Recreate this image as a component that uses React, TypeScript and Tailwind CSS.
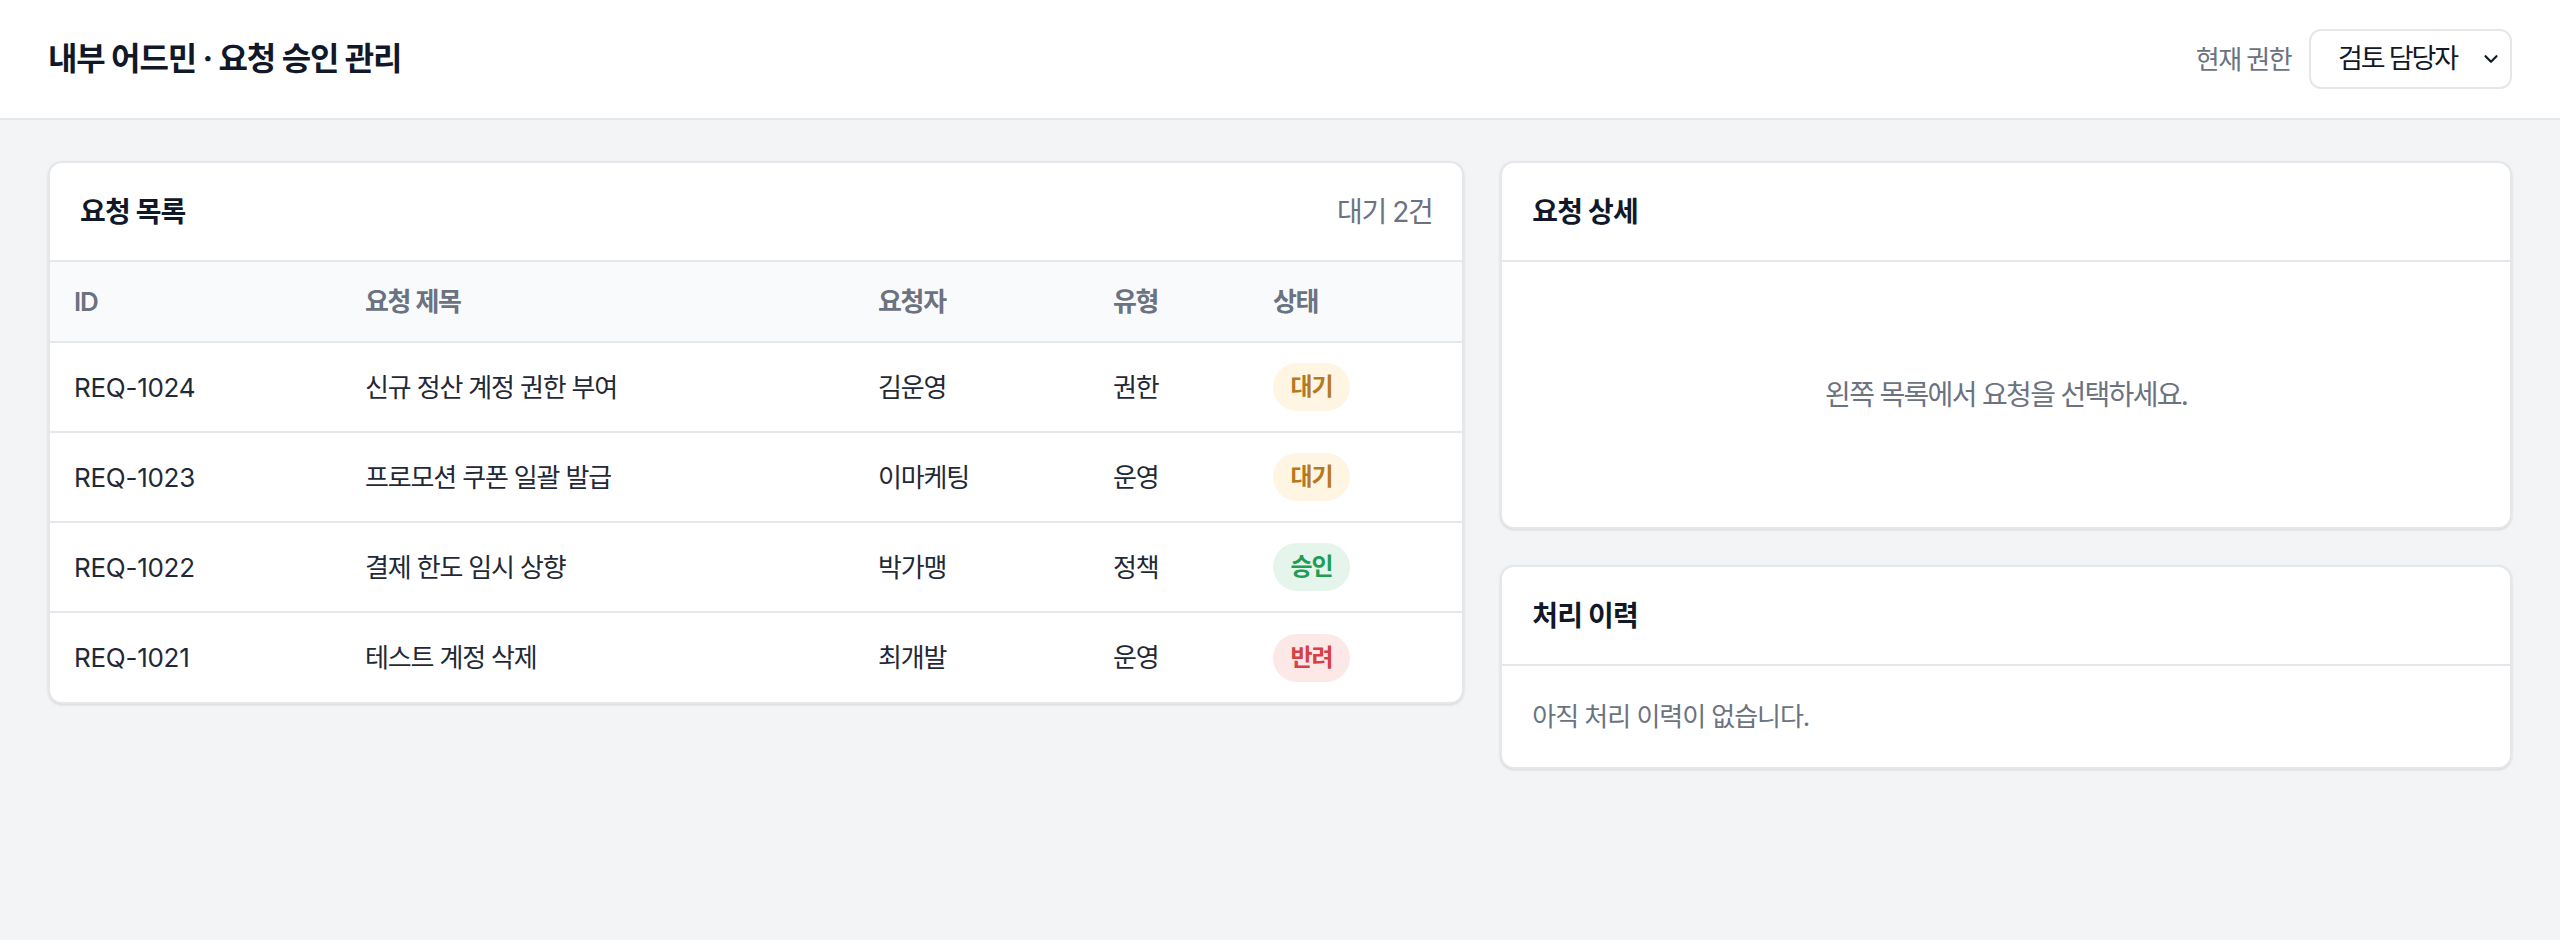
import { ChevronDown } from 'lucide-react'

type Status = 'pending' | 'approved' | 'rejected'

const requests: { id: string; title: string; requester: string; type: string; status: Status }[] = [
  { id: 'REQ-1024', title: '신규 정산 계정 권한 부여', requester: '김운영', type: '권한', status: 'pending' },
  { id: 'REQ-1023', title: '프로모션 쿠폰 일괄 발급', requester: '이마케팅', type: '운영', status: 'pending' },
  { id: 'REQ-1022', title: '결제 한도 임시 상향', requester: '박가맹', type: '정책', status: 'approved' },
  { id: 'REQ-1021', title: '테스트 계정 삭제', requester: '최개발', type: '운영', status: 'rejected' },
]

const statusLabels: Record<Status, string> = {
  pending: '대기',
  approved: '승인',
  rejected: '반려',
}

const statusStyles: Record<Status, string> = {
  pending: 'bg-[#fef6e2] text-[#b7791f]',
  approved: 'bg-[#e5f5eb] text-[#1f9d55]',
  rejected: 'bg-[#fde8e8] text-[#d63f43]',
}

const font = "font-['Inter','Noto_Sans_CJK_KR',sans-serif]"

function StatusBadge({ status }: { status: Status }) {
  return (
    <span
      className={`inline-flex h-[48px] w-[77px] items-center justify-center rounded-full text-[24px] font-semibold tracking-[-0.04em] ${statusStyles[status]}`}
    >
      {statusLabels[status]}
    </span>
  )
}

function CardHeader({ title, right }: { title: string; right?: string }) {
  return (
    <div className="flex h-[99px] items-center justify-between border-b-2 border-[#e5e7eb] px-[30px]">
      <h2 className="text-[28px] font-bold tracking-[-0.03em] text-[#111827]">{title}</h2>
      {right && <span className="text-[28px] tracking-[-0.05em] text-[#6b7280]">{right}</span>}
    </div>
  )
}

export default function App() {
  return (
    <div className={`min-h-[940px] bg-[#f3f4f6] ${font}`}>
      {/* Top bar */}
      <header className="flex h-[120px] items-center justify-between border-b-2 border-[#e5e7eb] bg-white px-12">
        <h1 className="text-[32px] font-bold tracking-[-0.035em] text-[#111827]">내부 어드민 · 요청 승인 관리</h1>
        <div className="flex items-center gap-[18px]">
          <span className="text-[26px] tracking-[-0.06em] text-[#6b7280]">현재 권한</span>
          <div className="flex h-[60px] w-[203px] items-center justify-between rounded-xl border-2 border-[#e5e7eb] bg-white pl-[27px] pr-[8px]">
            <span className="text-[27px] tracking-[-0.08em] text-[#111827]">검토 담당자</span>
            <ChevronDown className="h-[22px] w-[22px] text-[#111827]" strokeWidth={2.4} />
          </div>
        </div>
      </header>

      <main className="grid grid-cols-[1.4fr_1fr] items-start gap-[36px] px-12 pt-[41px]">
        {/* Request list */}
        <section className="overflow-hidden rounded-[14px] border-2 border-[#e5e7eb] bg-white shadow-sm">
          <CardHeader title="요청 목록" right="대기 2건" />
          <table className="w-full table-fixed border-collapse text-left">
            <colgroup>
              <col className="w-[291px]" />
              <col className="w-[513px]" />
              <col className="w-[235px]" />
              <col className="w-[160px]" />
              <col />
            </colgroup>
            <thead>
              <tr className="h-[80px] border-b-2 border-[#e5e7eb] bg-[#f9fafb]">
                {['ID', '요청 제목', '요청자', '유형', '상태'].map(h => (
                  <th key={h} className="pl-6 text-[26px] font-semibold tracking-[-0.05em] text-[#6b7280]">
                    {h}
                  </th>
                ))}
              </tr>
            </thead>
            <tbody>
              {requests.map((r, i) => (
                <tr
                  key={r.id}
                  className={`h-[90px] text-[26px] text-[#1f2937] ${i < requests.length - 1 ? 'border-b-2 border-[#e5e7eb]' : ''}`}
                >
                  <td className="pl-6 tracking-[-0.01em]">{r.id}</td>
                  <td className="pl-6 tracking-[-0.045em]">{r.title}</td>
                  <td className="pl-6 tracking-[-0.045em]">{r.requester}</td>
                  <td className="pl-6 tracking-[-0.045em]">{r.type}</td>
                  <td className="pl-6">
                    <StatusBadge status={r.status} />
                  </td>
                </tr>
              ))}
            </tbody>
          </table>
        </section>

        {/* Right column */}
        <div className="flex flex-col gap-[36px]">
          <section className="overflow-hidden rounded-[14px] border-2 border-[#e5e7eb] bg-white shadow-sm">
            <CardHeader title="요청 상세" />
            <div className="flex h-[265px] items-center justify-center">
              <p className="text-[28px] tracking-[-0.06em] text-[#6b7280]">왼쪽 목록에서 요청을 선택하세요.</p>
            </div>
          </section>

          <section className="overflow-hidden rounded-[14px] border-2 border-[#e5e7eb] bg-white shadow-sm">
            <CardHeader title="처리 이력" />
            <div className="flex h-[101px] items-center px-[30px]">
              <p className="text-[26px] tracking-[-0.04em] text-[#6b7280]">아직 처리 이력이 없습니다.</p>
            </div>
          </section>
        </div>
      </main>
    </div>
  )
}
